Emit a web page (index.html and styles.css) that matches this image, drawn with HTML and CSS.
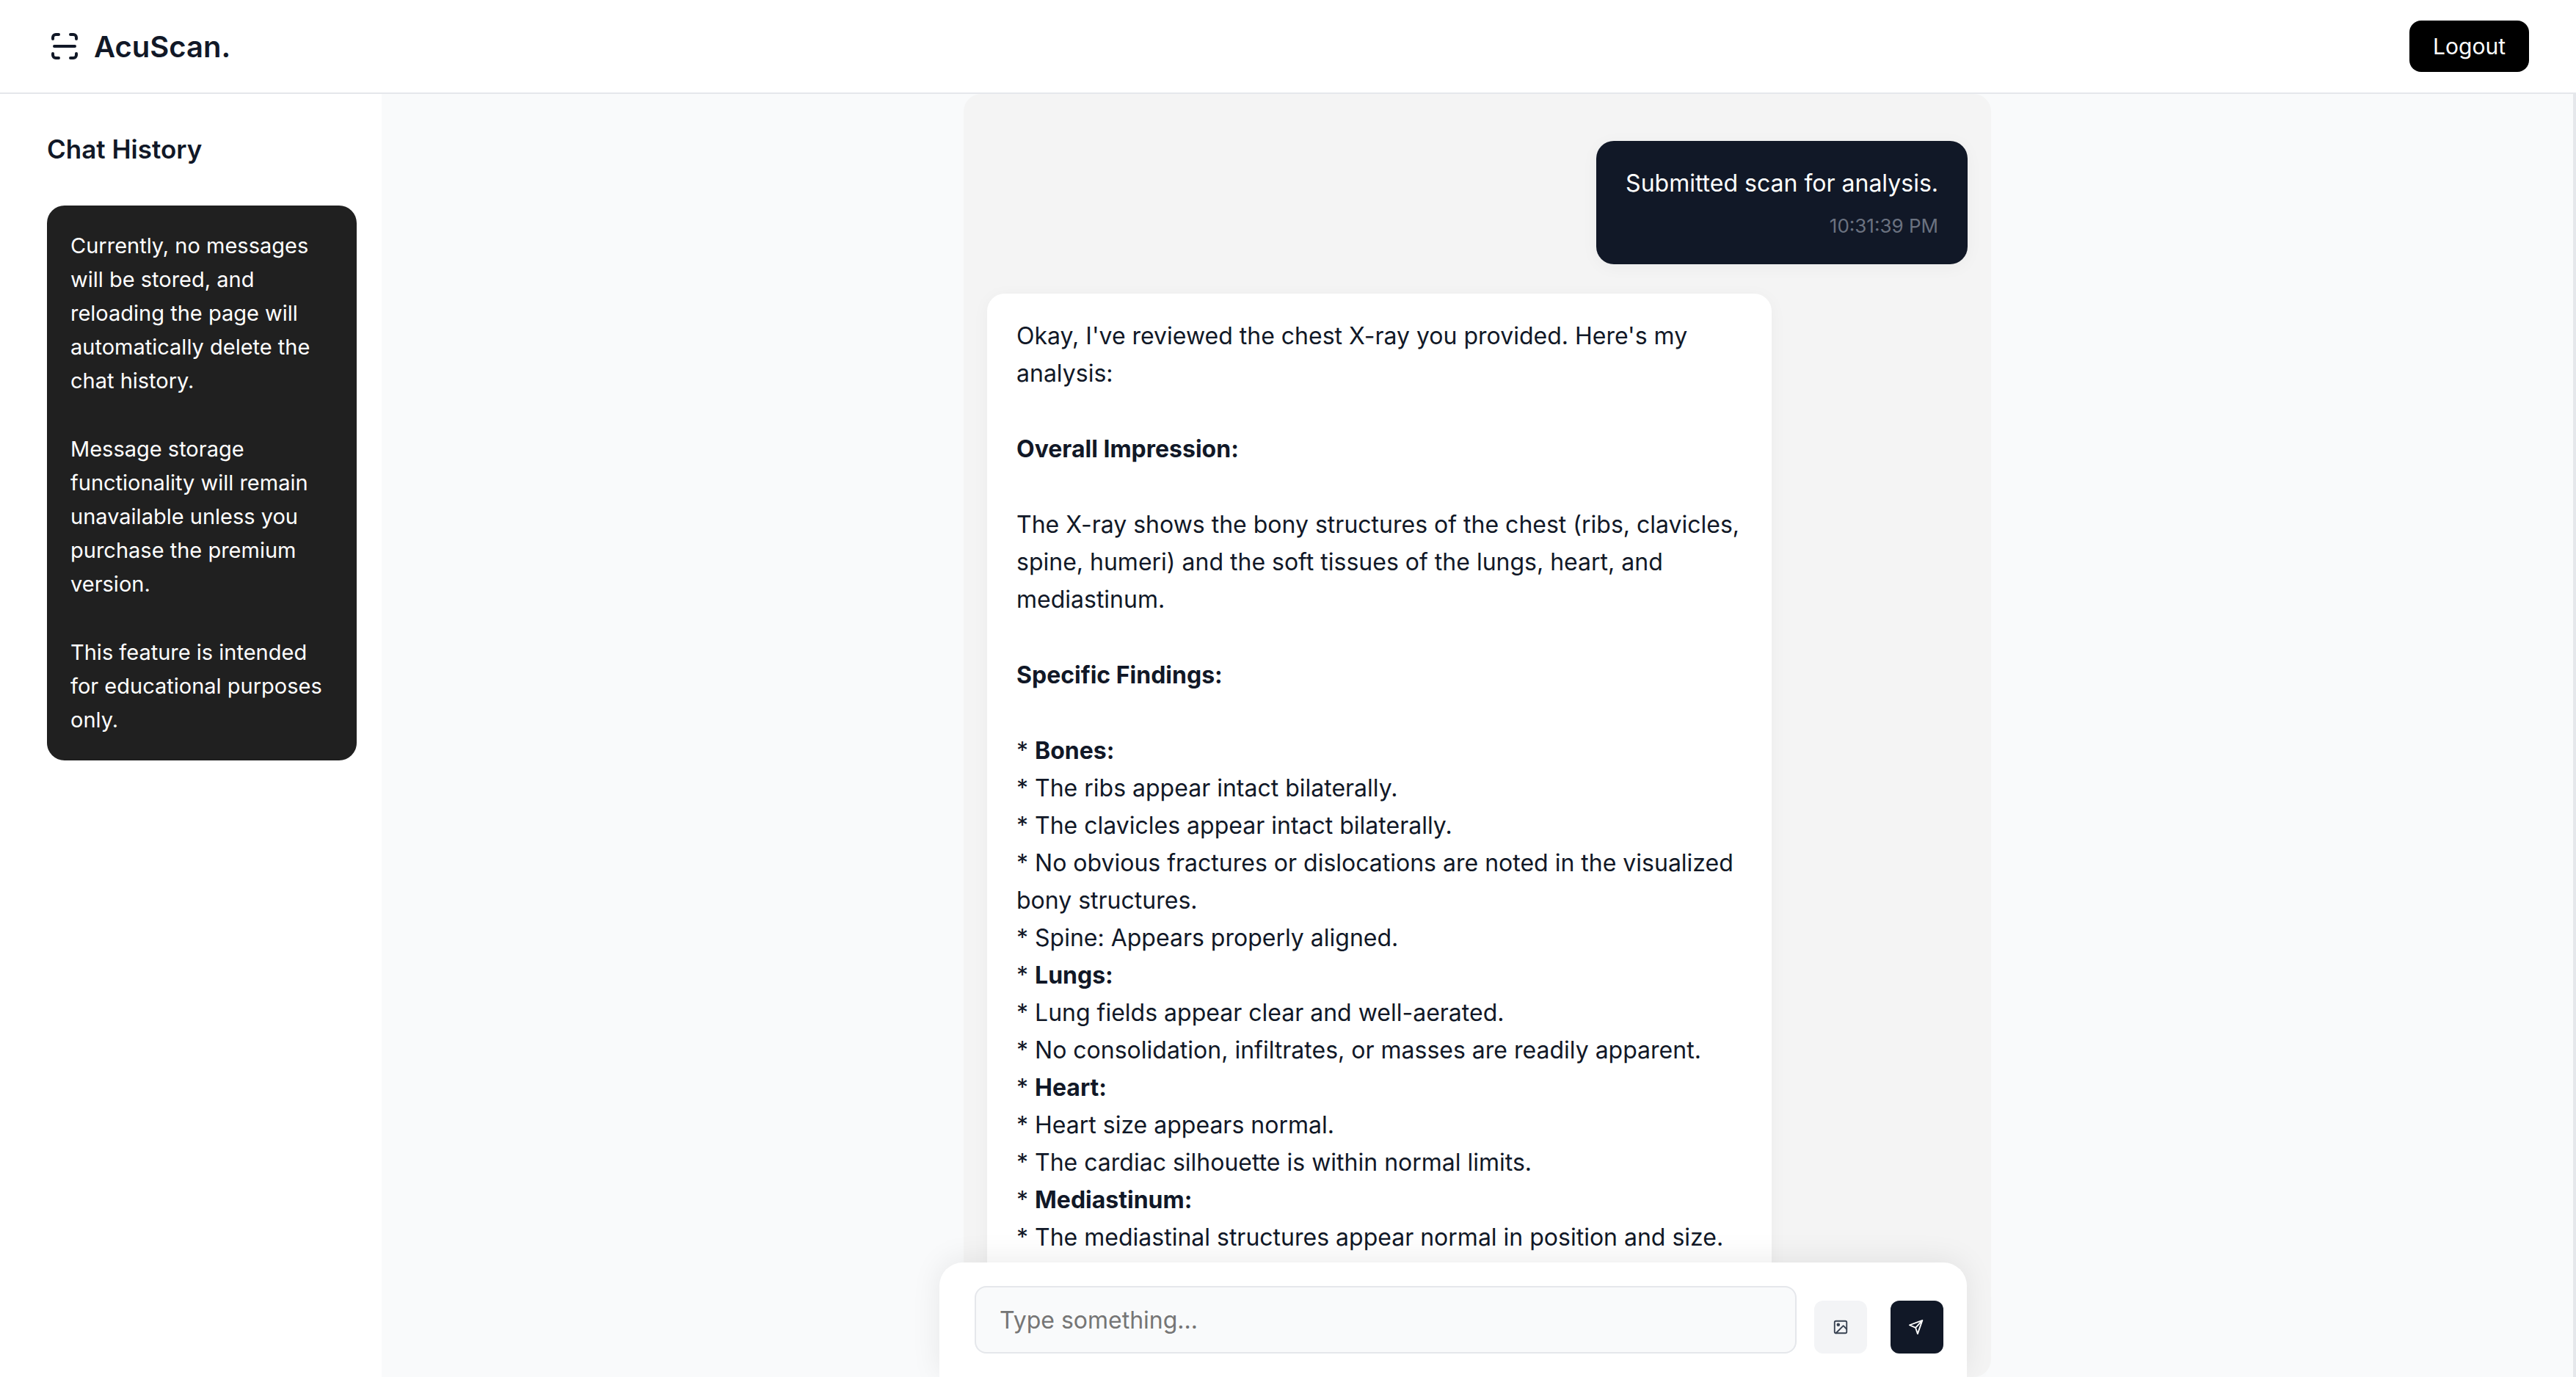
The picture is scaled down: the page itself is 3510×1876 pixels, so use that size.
FILE: index.html
```html
<!DOCTYPE html>
<html lang="en">
<head>
<meta charset="utf-8">
<meta name="viewport" content="width=device-width, initial-scale=1">
<title>AcuScan</title>
<link rel="stylesheet" href="styles.css">
</head>
<body>
<header class="topbar">
  <a class="brand" href="#">
    <svg class="brand-icon" viewBox="0 0 24 24" fill="none" stroke="currentColor" stroke-width="2" stroke-linecap="round" stroke-linejoin="round" aria-hidden="true">
      <path d="M4 7V6a2 2 0 0 1 2-2h2M4 17v1a2 2 0 0 0 2 2h2M16 4h2a2 2 0 0 1 2 2v1M16 20h2a2 2 0 0 0 2-2v-1M5 12h14"/>
    </svg>
    <span>AcuScan.</span>
  </a>
  <button class="logout" type="button">Logout</button>
</header>
<div class="layout">
  <aside class="sidebar">
    <h2 class="sidebar-title">Chat History</h2>
    <div class="notice">
      <p>Currently, no messages will be stored, and reloading the page will automatically delete the chat history.</p>
      <p>Message storage functionality will remain unavailable unless you purchase the premium version.</p>
      <p>This feature is intended for educational purposes only.</p>
    </div>
  </aside>
  <main class="chat">
    <section class="messages" aria-label="Messages">
      <article class="message message-user">
        <p>Submitted scan for analysis.</p>
        <time class="message-time">10:31:39 PM</time>
      </article>
      <article class="message message-bot">
        <p>Okay, I've reviewed the chest X-ray you provided. Here's my analysis:</p>
        <p><strong>Overall Impression:</strong></p>
        <p>The X-ray shows the bony structures of the chest (ribs, clavicles, spine, humeri) and the soft tissues of the lungs, heart, and mediastinum.</p>
        <p><strong>Specific Findings:</strong></p>
        <p>* <strong>Bones:</strong><br>
        * The ribs appear intact bilaterally.<br>
        * The clavicles appear intact bilaterally.<br>
        * No obvious fractures or dislocations are noted in the visualized bony structures.<br>
        * Spine: Appears properly aligned.<br>
        * <strong>Lungs:</strong><br>
        * Lung fields appear clear and well-aerated.<br>
        * No consolidation, infiltrates, or masses are readily apparent.<br>
        * <strong>Heart:</strong><br>
        * Heart size appears normal.<br>
        * The cardiac silhouette is within normal limits.<br>
        * <strong>Mediastinum:</strong><br>
        * The mediastinal structures appear normal in position and size.</p>
      </article>
    </section>
  </main>
  <div class="scroll-rail"></div>
</div>
<div class="composer-dock">
  <form class="composer">
    <input class="composer-input" type="text" placeholder="Type something..." aria-label="Message">
    <div class="composer-actions">
      <button class="icon-button" type="button" aria-label="Attach image">
        <svg class="action-icon" viewBox="0 0 24 24" fill="none" stroke="currentColor" stroke-width="2" stroke-linecap="round" stroke-linejoin="round" aria-hidden="true">
          <rect x="3" y="3" width="18" height="18" rx="2"/><circle cx="8.5" cy="8.5" r="1.5" fill="currentColor"/><path d="M21 15l-5-5L5 21"/>
        </svg>
      </button>
      <button class="icon-button icon-button-send" type="submit" aria-label="Send">
        <svg class="action-icon" viewBox="0 0 24 24" fill="none" stroke="currentColor" stroke-width="2" stroke-linecap="round" stroke-linejoin="round" aria-hidden="true">
          <path d="M20 2L10 13M20 2l-7 20-3-9-9-4z"/>
        </svg>
      </button>
    </div>
  </form>
</div>
</body>
</html>
```
FILE: styles.css
```css
* {
  box-sizing: border-box;
  margin: 0;
}

body {
  display: flex;
  flex-direction: column;
  height: 100vh;
  overflow: hidden;
  background: #f9fafb;
  color: #111827;
  font-family: Inter, "Liberation Sans", sans-serif;
  font-size: 32px;
  line-height: 51px;
}

button,
input {
  font: inherit;
}

.topbar {
  display: flex;
  flex: none;
  align-items: center;
  justify-content: space-between;
  padding: 28px 64px;
  border-bottom: 2px solid #e5e7eb;
  background: #fff;
}

.brand {
  display: flex;
  align-items: center;
  gap: 16px;
  color: inherit;
  font-size: 40px;
  font-weight: 600;
  text-decoration: none;
}

.brand-icon {
  width: 48px;
  height: 48px;
}

.logout {
  padding: 16px 32px;
  border: 0;
  border-radius: 16px;
  background: #000;
  color: #fff;
  font-size: 30px;
  line-height: 38px;
}

.layout {
  display: flex;
  flex: 1;
  min-height: 0;
}

.sidebar {
  flex: none;
  width: 520px;
  padding: 48px 34px 48px 64px;
  background: #fff;
}

.sidebar-title {
  margin-bottom: 50px;
  font-size: 35px;
  font-weight: 600;
  line-height: 54px;
}

.notice {
  padding: 32px;
  border-radius: 24px;
  background: #202020;
  color: #fff;
  font-size: 29px;
  line-height: 46px;
}

.notice p + p {
  margin-top: 47px;
}

.chat {
  display: flex;
  flex: 1;
  justify-content: center;
  min-width: 0;
}

.messages {
  display: flex;
  flex: 1;
  flex-direction: column;
  gap: 40px;
  max-width: 1400px;
  padding: 64px 32px;
  overflow: hidden;
  border-radius: 24px;
  background: #f4f4f4;
}

.message {
  flex: none;
  max-width: 80%;
  padding: 32px 40px;
  border-radius: 24px;
  box-shadow: 0 4px 24px rgba(0, 0, 0, 0.04);
}

.message-user {
  align-self: flex-end;
  background: #111827;
  color: #fff;
}

.message-bot {
  align-self: flex-start;
  background: #fff;
}

.message p + p {
  margin-top: 52px;
}

.message-time {
  display: block;
  margin-top: 12px;
  color: #6b7280;
  font-size: 26px;
  line-height: 41px;
  text-align: right;
}

.scroll-rail {
  flex: none;
  width: 4px;
  background: #e5e7eb;
}

.composer-dock {
  position: fixed;
  right: 0;
  bottom: 0;
  left: 450px;
  display: flex;
  justify-content: center;
  pointer-events: none;
}

.composer {
  display: flex;
  flex: 1;
  align-items: flex-end;
  gap: 24px;
  max-width: 1400px;
  padding: 32px 32px 32px 48px;
  border-radius: 32px 32px 0 0;
  background: #fff;
  box-shadow: 0 -4px 40px rgba(0, 0, 0, 0.08);
  pointer-events: auto;
}

.composer-input {
  flex: 1;
  min-width: 0;
  height: 92px;
  padding: 0 32px;
  border: 2px solid #e5e7eb;
  border-radius: 16px;
  background: #f9fafb;
  color: #111827;
}

.composer-input::placeholder {
  color: #757575;
}

.composer-actions {
  display: flex;
  gap: 32px;
}

.icon-button {
  display: flex;
  align-items: center;
  justify-content: center;
  width: 72px;
  height: 72px;
  padding: 0;
  border: 0;
  border-radius: 12px;
  background: #f3f4f6;
  color: #374151;
}

.icon-button-send {
  background: #111827;
  color: #fff;
}

.action-icon {
  width: 22px;
  height: 22px;
}
```
